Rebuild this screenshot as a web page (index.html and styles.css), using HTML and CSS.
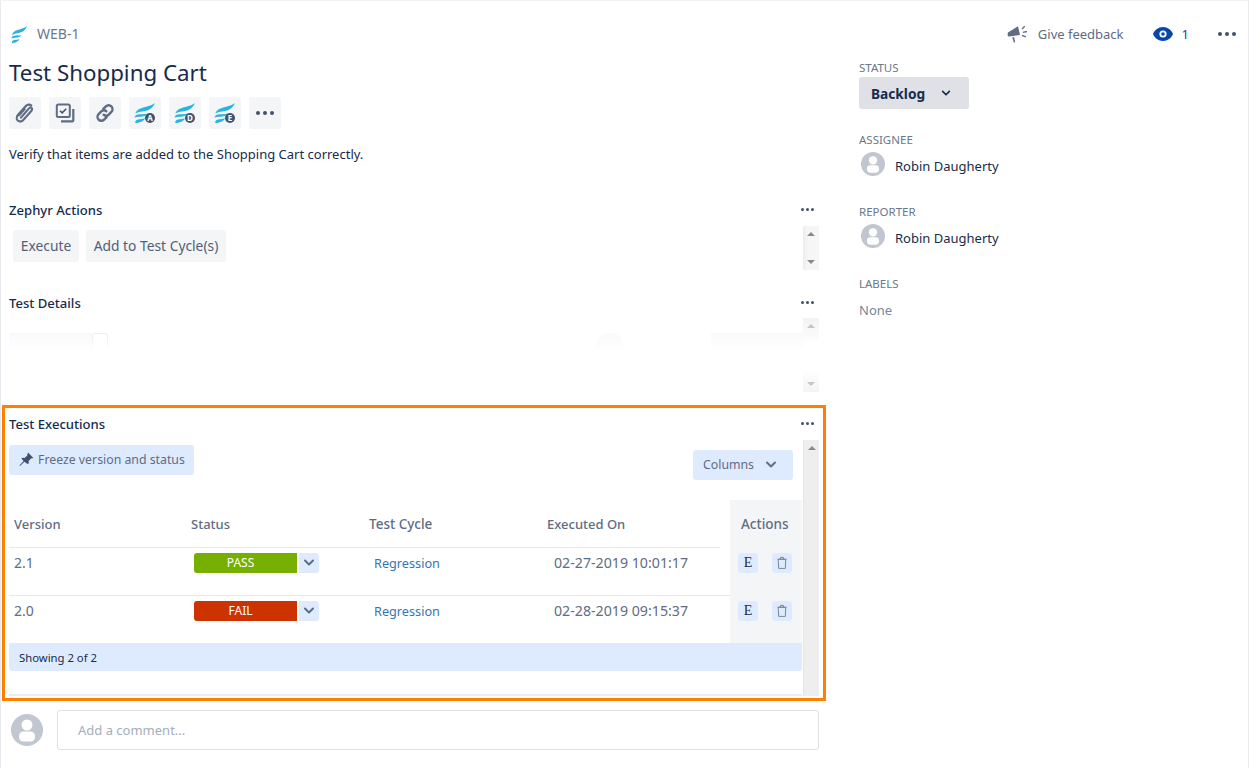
FILE: index.html
```html
<!DOCTYPE html>
<html lang="en">
<head>
  <meta charset="UTF-8">
  <title>WEB-1 Test Shopping Cart</title>
  <link rel="stylesheet" href="styles.css">
</head>
<body>
<svg class="defs" width="0" height="0" aria-hidden="true">
  <symbol id="wing" viewBox="0 0 16 17" preserveAspectRatio="none">
    <path d="M16 0C14 2 10 2.800 6.500 4 3.500 5 1.500 6.500 1 9 4 7 8 7.500 11 6 13.500 4.800 15 2.500 16 0Z"/>
    <path d="M.5 12.500C.6 11 1.500 10 3 9.800 5.500 9.400 8.500 9.800 10.500 9 9.500 11 7 11.500 4.500 11.700 3 11.800 1.500 12 .5 12.500Z"/>
    <path d="M1 17C.8 15.500 1.500 14.300 3 14 4.800 13.600 6.500 13.800 8.500 13 7.500 15.500 4 17 1 17Z"/>
  </symbol>
  <symbol id="avatar" viewBox="0 0 32 32">
    <circle cx="16" cy="16" r="16" fill="#c1c7d0"/>
    <circle cx="16" cy="11" r="5.500" fill="#fff"/>
    <rect x="8" y="17.500" width="16" height="10" rx="4.500" fill="#fff"/>
  </symbol>
  <symbol id="chevron" viewBox="0 0 12 8">
    <path d="M2 1.500l4 4 4-4" fill="none" stroke="currentColor" stroke-width="2" stroke-linecap="round" stroke-linejoin="round"/>
  </symbol>
  <symbol id="trash" viewBox="0 0 12 14">
    <path d="M2.200 3.400h7.600l-.5 9H2.700zM1.500 3.200h9M4.500 3V1.400h3V3" fill="none" stroke="currentColor"/>
  </symbol>
</svg>

<div class="page">
  <main class="issue">
    <div class="breadcrumb">
      <svg class="wing-logo"><use href="#wing"/></svg>
      <span>WEB-1</span>
    </div>
    <h1>Test Shopping Cart</h1>

    <div class="toolbar">
      <button class="tool" title="Attach">
        <svg width="22" height="22" viewBox="0 0 20 20" fill="none" stroke="#5e6c84" stroke-width="2" stroke-linecap="round">
          <path d="M6.300 14.200l7.500-8.600c1-1.200 2.800-.4 2.600 1.100-.1.600-.3 1-.7 1.500l-7.500 8.300c-1.800 2-5.200 1.300-5.700-1.300-.2-1.300.2-2.400 1-3.300L11 3.500c1.300-1.400 3.500-1.500 4.700-.3"/>
          <path d="M9.600 6.500l-5 5.600"/>
        </svg>
      </button>
      <button class="tool" title="Create subtask">
        <svg width="20" height="20" viewBox="0 0 20 20" fill="none" stroke="#5e6c84" stroke-width="2">
          <rect x="1.800" y="1.500" width="13" height="12.500" rx="1.500"/>
          <path d="M5 7.700l2.200 2.200 4-4.200" stroke="#42526e" stroke-width="1.600"/>
          <path d="M18.300 6v11.300a1 1 0 0 1-1 1H6" stroke-width="2.200"/>
        </svg>
      </button>
      <button class="tool" title="Link issue">
        <svg width="22" height="22" viewBox="0 0 20 20" fill="none" stroke="#5e6c84" stroke-width="2.200" stroke-linecap="round">
          <path d="M8.500 6.300l2.300-2.300c1.400-1.400 3.700-1.400 5 0s1.400 3.600 0 5l-2.400 2.400c-1.300 1.300-3.300 1.300-4.600.2"/>
          <path d="M11.500 13.700l-2.300 2.300c-1.400 1.400-3.700 1.400-5 0s-1.400-3.600 0-5l2.400-2.400c1.300-1.300 3.300-1.300 4.600-.2"/>
        </svg>
      </button>
      <button class="tool" title="Zephyr A">
        <svg class="wing-badge" width="22" height="20" viewBox="0 0 22 20"><use href="#wing" width="21" height="20"/><circle cx="16" cy="15" r="5" class="badge"/><text x="16" y="17.800">A</text></svg>
      </button>
      <button class="tool" title="Zephyr D">
        <svg class="wing-badge" width="22" height="20" viewBox="0 0 22 20"><use href="#wing" width="21" height="20"/><circle cx="16" cy="15" r="5" class="badge"/><text x="16" y="17.800">D</text></svg>
      </button>
      <button class="tool" title="Zephyr E">
        <svg class="wing-badge" width="22" height="20" viewBox="0 0 22 20"><use href="#wing" width="21" height="20"/><circle cx="16" cy="15" r="5" class="badge"/><text x="16" y="17.800">E</text></svg>
      </button>
      <button class="tool dots-lg" title="More"><i></i><i></i><i></i></button>
    </div>

    <p class="description">Verify that items are added to the Shopping Cart correctly.</p>

    <section class="panel panel-zephyr">
      <header class="panel-head">
        <h2>Zephyr Actions</h2>
        <span class="dots-sm"><i></i><i></i><i></i></span>
      </header>
      <div class="panel-body body-actions">
        <div class="panel-content action-buttons">
          <button class="plain-btn btn-execute">Execute</button>
          <button class="plain-btn btn-add">Add to Test Cycle(s)</button>
        </div>
        <div class="scrollbar bar-clear"><b class="arrow-up"></b><b class="arrow-down"></b></div>
      </div>
    </section>

    <section class="panel panel-details">
      <header class="panel-head">
        <h2>Test Details</h2>
        <span class="dots-sm"><i></i><i></i><i></i></span>
      </header>
      <div class="panel-body body-details">
        <div class="panel-content ghost-row">
          <span class="ghost-bar ghost-a"></span>
          <span class="ghost-box"></span>
          <span class="ghost-circle"></span>
          <span class="ghost-bar ghost-b"></span>
        </div>
        <div class="scrollbar bar-faded"><b class="arrow-up"></b><b class="arrow-down"></b></div>
      </div>
    </section>

    <section class="panel panel-exec">
      <header class="panel-head">
        <h2>Test Executions</h2>
        <span class="dots-sm"><i></i><i></i><i></i></span>
      </header>
      <div class="panel-body body-exec">
        <div class="panel-content exec-content">
          <div class="exec-tools">
            <button class="blue-btn btn-freeze">
              <svg width="15" height="15" viewBox="0 0 15 15" fill="#42526e"><path d="M9.300.8l4.900 4.900-1 .9-.9-.3-2.700 2.700c.4 1.300.1 2.500-.7 3.300L5.400 9.800 1 14l-.6-.5 4.200-4.400L2.300 6.600c.9-.8 2.100-1.100 3.400-.7l2.700-2.700-.1-1.100z"/></svg>
              <span>Freeze version and status</span>
            </button>
            <button class="blue-btn btn-columns">
              <span>Columns</span>
              <svg width="12" height="8"><use href="#chevron"/></svg>
            </button>
          </div>

          <table class="exec-table">
            <colgroup>
              <col class="col-main"><col class="col-main2"><col class="col-main2"><col class="col-main2"><col class="col-gap"><col class="col-actions">
            </colgroup>
            <thead>
              <tr>
                <th>Version</th>
                <th>Status</th>
                <th class="th-cycle">Test Cycle</th>
                <th>Executed On</th>
                <th class="gap"></th>
                <th class="actions">Actions</th>
              </tr>
            </thead>
            <tbody>
              <tr class="row-first">
                <td>2.1</td>
                <td>
                  <div class="status">
                    <span class="pill pass">PASS</span>
                    <span class="pill-drop"><svg width="12" height="8"><use href="#chevron"/></svg></span>
                  </div>
                </td>
                <td class="cycle"><a href="#">Regression</a></td>
                <td class="date">02-27-2019 10:01:17</td>
                <td class="gap"></td>
                <td class="actions">
                  <div class="row-actions">
                    <span class="icon-btn e-btn">E</span>
                    <span class="icon-btn"><svg width="12" height="14"><use href="#trash"/></svg></span>
                  </div>
                </td>
              </tr>
              <tr class="row-second">
                <td>2.0</td>
                <td>
                  <div class="status">
                    <span class="pill fail">FAIL</span>
                    <span class="pill-drop"><svg width="12" height="8"><use href="#chevron"/></svg></span>
                  </div>
                </td>
                <td class="cycle"><a href="#">Regression</a></td>
                <td class="date">02-28-2019 09:15:37</td>
                <td class="gap"></td>
                <td class="actions">
                  <div class="row-actions">
                    <span class="icon-btn e-btn">E</span>
                    <span class="icon-btn"><svg width="12" height="14"><use href="#trash"/></svg></span>
                  </div>
                </td>
              </tr>
            </tbody>
          </table>
          <div class="showing">Showing 2 of 2</div>
        </div>
        <div class="scrollbar bar-exec"><b class="arrow-up"></b></div>
      </div>
    </section>

    <div class="comment">
      <svg class="comment-avatar"><use href="#avatar"/></svg>
      <div class="comment-input">Add a comment...</div>
    </div>
  </main>

  <aside class="side">
    <div class="side-top">
      <span class="feedback">
        <svg width="21" height="20" viewBox="0 0 21 20" fill="#5e6c84">
          <path d="M1 8.500l10-6.200 2 8.700-11 1.500c-.8.100-1.300-.4-1.300-1V9.400c0-.4.100-.7.300-.9z"/>
          <path d="M5.200 13.300l2 0 .9 5-1.300.3z"/>
          <path d="M14.600 4.600l2.600-2.800 1 1-2.700 2.700zM15.700 7.700l4-.9.300 1.400-4 .8zM15.300 10.700l3.800 1.500-.5 1.200-3.800-1.500z"/>
        </svg>
        Give feedback
      </span>
      <span class="watch">
        <svg width="20" height="14" viewBox="0 0 20 14"><path d="M10 0c4.700 0 8.400 3.200 10 7-1.600 3.800-5.300 7-10 7S1.600 10.800 0 7c1.600-3.800 5.300-7 10-7z" fill="#0747a6"/><circle cx="10" cy="7" r="3.600" fill="#fff"/><circle cx="10" cy="7" r="1.800" fill="#0747a6"/></svg>
        1
      </span>
      <span class="side-dots"><i></i><i></i><i></i></span>
    </div>

    <div class="field-label label-status">STATUS</div>
    <button class="status-btn"><span>Backlog</span> <svg width="10" height="7"><use href="#chevron"/></svg></button>

    <div class="field-label label-next">ASSIGNEE</div>
    <div class="person"><svg class="person-avatar"><use href="#avatar"/></svg><span>Robin Daugherty</span></div>

    <div class="field-label label-next">REPORTER</div>
    <div class="person"><svg class="person-avatar"><use href="#avatar"/></svg><span>Robin Daugherty</span></div>

    <div class="field-label label-next">LABELS</div>
    <div class="none-text">None</div>
  </aside>
</div>
</body>
</html>
```

FILE: styles.css
```css
* {
  box-sizing: border-box;
}
html, body {
  margin: 0;
  height: 100%;
  overflow: hidden;
  background: #fff;
}
body {
  font-family: "Noto Sans", "Open Sans", sans-serif;
  font-size: 13px;
  line-height: 20px;
  color: #172b4d;
}
button {
  font: inherit;
  border: 0;
  padding: 0;
  cursor: pointer;
}
.defs {
  position: absolute;
}
.page {
  display: flex;
  height: 768px;
  border-left: 1px solid #e9e9f0;
  border-right: 1px solid #e9e9f0;
  border-top: 1px solid #f2f2f6;
}

/* main column */
.issue {
  width: 818px;
  padding: 21px 0 0 8px;
  flex: none;
}
.breadcrumb {
  display: flex;
  align-items: center;
  height: 24px;
  padding-left: 2px;
  font-size: 14px;
  color: #6b778c;
}
.wing-logo {
  width: 16px;
  height: 17px;
  margin-right: 10px;
  fill: #29b3e0;
}
h1 {
  margin: 11px 0 0;
  font-size: 22.300px;
  font-weight: 400;
  line-height: 32px;
}
.toolbar {
  display: flex;
  gap: 8px;
  margin-top: 8px;
}
.tool {
  display: flex;
  align-items: center;
  justify-content: center;
  width: 32px;
  height: 32px;
  background: #f4f5f7;
  border-radius: 3px;
}
.wing-badge {
  fill: #29b3e0;
}
.wing-badge .badge {
  fill: #42526e;
}
.wing-badge text {
  fill: #fff;
  font-size: 8px;
  font-weight: 700;
  text-anchor: middle;
}
.dots-lg {
  gap: 3px;
}
.dots-lg i, .side-dots i {
  width: 4px;
  height: 4px;
  border-radius: 50%;
  background: #42526e;
}
.description {
  margin: 15px 0 0;
  height: 20px;
}

/* panels */
.panel-zephyr {
  margin-top: 30px;
}
.panel-details {
  margin-top: 17px;
}
.panel-exec {
  margin: 13px -7px 0 -7px;
  padding: 0 4px;
  border: 3px solid #ff8000;
  height: 296px;
}
.panel-head {
  display: flex;
  align-items: center;
  justify-content: space-between;
  height: 32px;
}
h2 {
  margin: 0;
  font-size: 13.100px;
  font-weight: 500;
  line-height: 20px;
}
.dots-sm {
  display: flex;
  gap: 2px;
  margin: -2px 5px 0 0;
}
.dots-sm i {
  width: 3px;
  height: 3px;
  border-radius: 50%;
  background: #42526e;
}
.panel-body {
  display: flex;
  justify-content: space-between;
}
.panel-content {
  flex: 1;
}
.body-actions {
  height: 44px;
}
.body-details {
  height: 74px;
  margin-top: -1px;
}
.body-exec {
  height: 256px;
}
.action-buttons {
  display: flex;
  gap: 7px;
  padding: 4px 0 0 4px;
}
.plain-btn {
  height: 32px;
  background: #f4f5f7;
  color: #505f79;
  font-size: 13.800px;
  border-radius: 3px;
}
.btn-execute {
  width: 66px;
}
.btn-add {
  width: 140px;
}

/* scrollbars */
.scrollbar {
  position: relative;
  flex: none;
  width: 16px;
  background: #f1f1f1;
}
.bar-clear {
  background: linear-gradient(90deg, #ececec, #f6f6f6 30%, #f6f6f6);
}
.bar-faded {
  background: linear-gradient(#f1f1f1, #fff 35%, #fff 70%, #f3f3f3);
  opacity: .85;
}
.bar-faded b {
  opacity: .55;
}
.bar-exec {
  background: #eeeeee;
  border-left: 1px solid #e4e4e4;
}
.arrow-up, .arrow-down {
  position: absolute;
  left: 4px;
  width: 0;
  height: 0;
  border-left: 4px solid transparent;
  border-right: 4px solid transparent;
}
.arrow-up {
  top: 6px;
  border-bottom: 4px solid #8a8a8a;
}
.arrow-down {
  bottom: 6px;
  border-top: 4px solid #8a8a8a;
}

/* washed out details row */
.ghost-row {
  display: flex;
  height: 18px;
  margin-top: 15px;
}
.ghost-bar {
  height: 18px;
  background: linear-gradient(#f8f9fb, #fff);
}
.ghost-a {
  width: 83px;
}
.ghost-box {
  width: 16px;
  height: 18px;
  border: 1px solid #ececee;
  border-bottom: 0;
  border-radius: 2px 2px 0 0;
  -webkit-mask-image: linear-gradient(#000, transparent);
  mask-image: linear-gradient(#000, transparent);
}
.ghost-circle {
  width: 30px;
  height: 18px;
  margin-left: 487px;
  border-radius: 15px 15px 0 0;
  background: linear-gradient(#f9f9fa, #fff);
}
.ghost-b {
  width: 92px;
  margin-left: 86px;
}

/* test executions */
.exec-content {
  margin-right: 1px;
  padding-top: 5px;
  height: 256px;
  border-bottom: 2px solid #ebecf0;
}
.exec-tools {
  display: flex;
  justify-content: space-between;
  align-items: flex-start;
  height: 55px;
}
.blue-btn {
  display: flex;
  align-items: center;
  height: 30px;
  background: #deebff;
  color: #5e6c84;
  font-size: 12.300px;
  border-radius: 3px;
}
.btn-freeze {
  width: 185px;
  padding: 0 0 1px 10px;
  gap: 4px;
}
.btn-columns {
  width: 100px;
  margin: 5px 9px 0 0;
  padding-left: 10px;
  gap: 11px;
}
.exec-table {
  width: 793px;
  table-layout: fixed;
  border-collapse: separate;
  border-spacing: 0;
}
.col-main { width: 177px; }
.col-main2 { width: 178px; }
.col-gap { width: 10px; }
.col-actions { width: 72px; }
.exec-table th {
  height: 48px;
  padding: 0 0 0 5px;
  text-align: left;
  font-weight: 500;
  color: #5e6c84;
  border-bottom: 1px solid #e6e8ec;
  vertical-align: middle;
}
.exec-table .th-cycle {
  font-size: 13.500px;
}
.exec-table td {
  padding: 5px 0 0 5px;
  vertical-align: top;
  font-size: 14px;
  color: #5e6c84;
}
.row-first td {
  height: 47px;
}
.exec-table .gap {
  padding: 0;
}
.exec-table th.gap {
  border-bottom: 0;
}
.row-second td {
  border-top: 1px solid #e6e8ec;
  height: 48px;
}
.exec-table .actions {
  background: #f4f5f7;
  border: 0;
  padding: 5px 0 0 0;
}
.exec-table .row-second .actions {
  padding-top: 6px;
}
.exec-table th.actions {
  text-align: left;
  font-size: 13.500px;
  padding: 0 0 0 11px;
}
.status {
  display: flex;
  gap: 2px;
  margin-left: 3px;
}
.pill {
  width: 103px;
  height: 20px;
  border-radius: 3px 0 0 3px;
  color: #fff;
  font-size: 12px;
  line-height: 19px;
  text-align: center;
  padding-right: 10px;
}
.pass { background: #75b000; }
.fail { background: #cc3300; }
.pill-drop {
  display: flex;
  align-items: center;
  justify-content: center;
  width: 20px;
  height: 20px;
  background: #deebff;
  color: #5e6c84;
  border-radius: 0 3px 3px 0;
}
.exec-table .cycle {
  padding-left: 10px;
  font-size: 12.700px;
}
.cycle a {
  color: #3b73af;
  text-decoration: none;
}
.exec-table .date {
  padding-left: 12px;
  font-size: 14.200px;
}
.row-actions {
  display: flex;
  justify-content: space-between;
  padding: 0 10px 0 8px;
}
.icon-btn {
  display: flex;
  align-items: center;
  justify-content: center;
  width: 20px;
  height: 20px;
  background: #deebff;
  color: #7a869a;
  border-radius: 3px;
}
.e-btn {
  color: #172b4d;
  font-family: "Liberation Serif", serif;
  font-size: 14px;
}
.showing {
  height: 28px;
  padding-left: 10px;
  background: #deebff;
  font-size: 11.300px;
  line-height: 29px;
  border-radius: 0 0 3px 3px;
}

/* comment box */
.comment {
  display: flex;
  margin-top: 9px;
}
.comment-avatar {
  width: 32px;
  height: 32px;
  margin: 4px 14px 0 2px;
}
.comment-input {
  flex: 1;
  height: 40px;
  padding-left: 20px;
  line-height: 38px;
  color: #a5adba;
  border: 1px solid #dfe1e6;
  border-radius: 3px;
}

/* sidebar */
.side {
  flex: 1;
  margin-left: 40px;
  padding-top: 21px;
}
.side-top {
  display: flex;
  align-items: center;
  justify-content: flex-end;
  height: 24px;
  padding-right: 12px;
  color: #5e6c84;
}
.feedback {
  display: flex;
  align-items: center;
  gap: 10px;
}
.watch {
  display: flex;
  align-items: center;
  gap: 9px;
  margin-left: 29px;
  color: #0747a6;
}
.side-dots {
  display: flex;
  gap: 3px;
  margin-left: 29px;
}
.field-label {
  font-size: 11.500px;
  line-height: 18px;
  color: #6b778c;
  height: 16px;
}
.label-status {
  margin-top: 13px;
}
.label-next {
  margin-top: 22px;
}
.status-btn {
  display: flex;
  align-items: center;
  gap: 16px;
  width: 110px;
  height: 32px;
  margin-top: 2px;
  padding-left: 12px;
  background: #dfe1e6;
  color: #172b4d;
  font-size: 13.700px;
  font-weight: 700;
  border-radius: 3px;
}
.status-btn span {
  margin-top: 1px;
}
.person {
  display: flex;
  align-items: flex-start;
  height: 29px;
  margin-top: 5px;
  padding-left: 2px;
}
.person span {
  margin: 4px 0 0 10px;
}
.person-avatar {
  width: 24px;
  height: 24px;
}
.none-text {
  margin-top: 9px;
  color: #7a869a;
}
```
